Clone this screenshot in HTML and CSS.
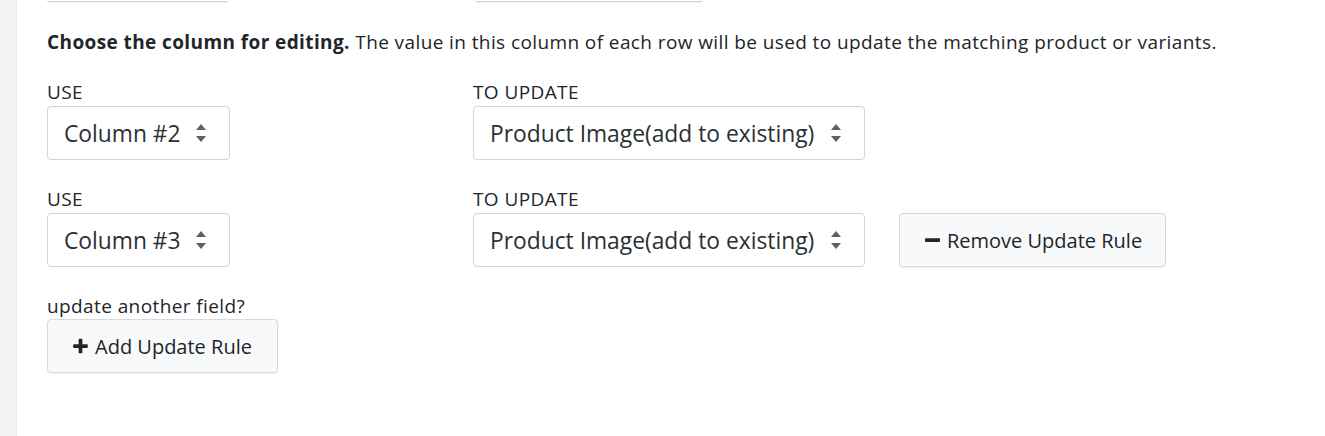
FILE: index.html
```html
<!DOCTYPE html>
<html lang="en">
<head>
<meta charset="utf-8">
<title>Update rules</title>
<link rel="stylesheet" href="styles.css">
</head>
<body>
<div class="layout">
  <aside class="sidebar"></aside>
  <main class="content">
    <div class="prev-row">
      <div class="prev prev-a"></div>
      <div class="prev prev-b"></div>
    </div>
    <p class="intro"><strong>Choose the column for editing.</strong> The value in this column of each row will be used to update the matching product or variants.</p>

    <div class="rule">
      <div class="field">
        <label class="label">USE</label>
        <div class="select sel-col"><span>Column #2</span><svg class="caret" viewBox="0 0 10 18" width="10" height="18"><path d="M5 0L0 6h10zM5 18L0 12h10z"/></svg></div>
      </div>
      <div class="field">
        <label class="label">TO UPDATE</label>
        <div class="select sel-target"><span>Product Image(add to existing)</span><svg class="caret" viewBox="0 0 10 18" width="10" height="18"><path d="M5 0L0 6h10zM5 18L0 12h10z"/></svg></div>
      </div>
    </div>

    <div class="rule">
      <div class="field">
        <label class="label">USE</label>
        <div class="select sel-col"><span>Column #3</span><svg class="caret" viewBox="0 0 10 18" width="10" height="18"><path d="M5 0L0 6h10zM5 18L0 12h10z"/></svg></div>
      </div>
      <div class="field">
        <label class="label">TO UPDATE</label>
        <div class="select sel-target"><span>Product Image(add to existing)</span><svg class="caret" viewBox="0 0 10 18" width="10" height="18"><path d="M5 0L0 6h10zM5 18L0 12h10z"/></svg></div>
      </div>
      <div class="field action">
        <button class="btn btn-remove"><svg class="icon" viewBox="0 0 16 16" width="15" height="16"><rect x="0" y="6" width="16" height="4" rx="1" fill="#212529"/></svg>Remove Update Rule</button>
      </div>
    </div>

    <div class="add">
      <div class="hint">update another field?</div>
      <button class="btn btn-add"><svg class="icon" viewBox="0 0 16 16" width="15" height="16"><path d="M6 1.2c0-.6.4-1 1-1h2c.6 0 1 .4 1 1V6h4.8c.6 0 1 .4 1 1v2c0 .6-.4 1-1 1H10v4.8c0 .6-.4 1-1 1H7c-.6 0-1-.4-1-1V10H1.2c-.6 0-1-.4-1-1V7c0-.6.4-1 1-1H6z" fill="#212529"/></svg>Add Update Rule</button>
    </div>
  </main>
</div>
</body>
</html>
```

FILE: styles.css
```css
* { box-sizing: border-box; }
html, body { margin: 0; padding: 0; background: #fff; }
body {
  font-family: "Open Sans", "Noto Sans", sans-serif;
  color: #212529;
  font-size: 19px;
  letter-spacing: 0.4px;
  line-height: 27px;
}
.layout {
  display: flex;
  min-height: 436px;
}
.sidebar {
  width: 17px;
  flex: none;
  background: #f3f4f6;
  border-right: 1px solid #e6e8eb;
}
.content {
  flex: 1;
  padding-left: 30px;
}
.prev-row {
  display: grid;
  grid-template-columns: 428px 1fr;
  height: 2px;
}
.prev {
  height: 2px;
  border-bottom: 1px solid #d0d4d8;
  box-shadow: 0 1px 1px rgba(0,0,0,0.06);
  border-radius: 0 0 4px 4px;
}
.prev-a { width: 181px; }
.prev-b { width: 228px; }
.intro {
  margin: 27px 0 23px;
}
.intro strong { font-weight: 700; }
.rule {
  display: grid;
  grid-template-columns: 426px 426px auto;
  align-items: end;
  margin-bottom: 26px;
}
.field { display: flex; flex-direction: column; align-items: flex-start; }
.label { display: block; }
.select {
  display: flex;
  align-items: center;
  justify-content: space-between;
  height: 54px;
  padding: 0 23px 0 16px;
  border: 1px solid #ced4da;
  border-radius: 4px;
  background: #fff;
  font-size: 22.8px;
  letter-spacing: 0;
  color: #2b3035;
}
.sel-col { width: 183px; }
.sel-target { width: 392px; }
.caret { flex: none; fill: #5a6168; }
.btn {
  display: inline-flex;
  align-items: center;
  gap: 7px;
  height: 54px;
  border: 1px solid #d6dade;
  border-radius: 4px;
  background: #f8f9fa;
  color: #212529;
  font-family: inherit;
  font-size: 20px;
  letter-spacing: 0;
  box-shadow: 0 1px 2px rgba(0,0,0,0.06);
  cursor: pointer;
}
.btn-remove { width: 267px; padding: 0 0 0 25px; }
.btn-add { width: 231px; padding: 0 0 0 25px; }
.hint { line-height: 26px; }
.add { display: flex; flex-direction: column; align-items: flex-start; }
```
